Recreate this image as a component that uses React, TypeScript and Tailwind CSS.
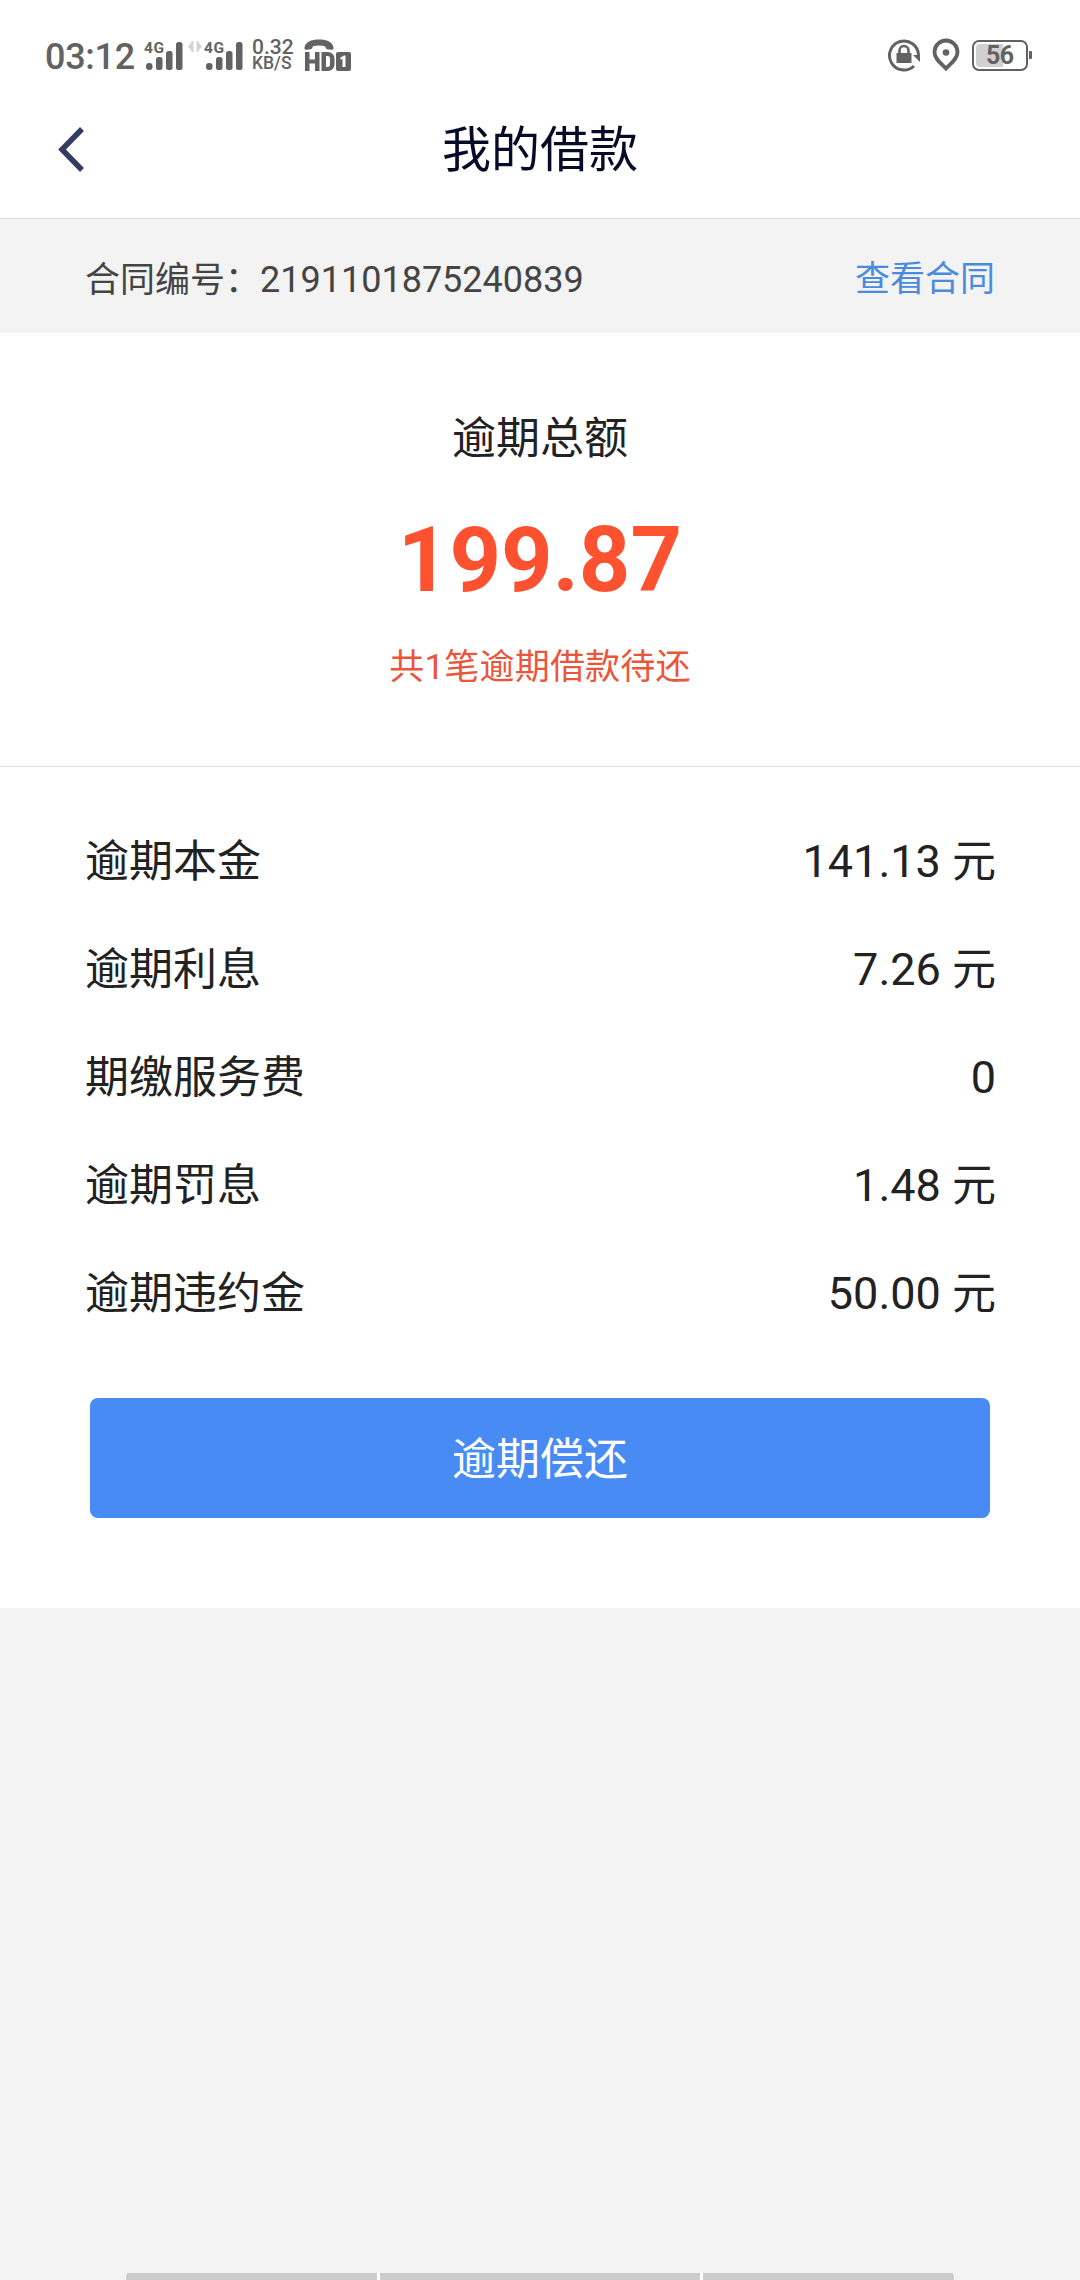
import React from "react";

const rows = [
  { label: "逾期本金", value: "141.13 ", unit: "元" },
  { label: "逾期利息", value: "7.26 ", unit: "元" },
  { label: "期缴服务费", value: "0" },
  { label: "逾期罚息", value: "1.48 ", unit: "元" },
  { label: "逾期违约金", value: "50.00 ", unit: "元" },
];

function SignalIcon() {
  return (
    <svg width="40" height="32" viewBox="0 0 40 32" fill="#626262">
      <text x="0" y="14" fontSize="15.5" fontWeight="700" textLength="20">4G</text>
      <rect x="2" y="24" width="6.5" height="7" rx="3" />
      <rect x="12" y="18" width="6.5" height="13" rx="2.5" />
      <rect x="22" y="12" width="6.5" height="19" rx="2.5" />
      <rect x="32" y="3" width="6.5" height="28" rx="2.5" />
    </svg>
  );
}

function DataArrows() {
  return (
    <svg width="14" height="32" viewBox="0 0 14 32" fill="#d2d2d2">
      <path d="M0 7.5 4 3v9zM14 7.5 10 3v9z" />
      <rect x="3.5" y="2" width="2" height="11" />
      <rect x="8.5" y="2" width="2" height="11" />
    </svg>
  );
}

function HdCallIcon() {
  return (
    <svg width="48" height="34" viewBox="0 0 48 34" fill="#626262">
      <path d="M0.500 9.500C1.500 4 7 1.500 15 1.500s13.500 2.500 14.500 8c.2 1.500-.5 2.300-2 2.300l-4-.6c-1.500-.3-2-1-2.200-2.700-4-1.200-8.600-1.200-12.600 0-.2 1.700-.7 2.400-2.200 2.700l-4 .6c-1.500 0-2.200-.8-2-2.300z" />
      <path d="M1 14h4.500v7.500h5.500V14h4.500v19H11v-7.500H5.500V33H1z" />
      <path fillRule="evenodd" d="M17.500 14h6c4.500 0 7 3 7 7v5c0 4-2.500 7-7 7h-6zm4.500 4v11h1.500c2 0 2.500-1 2.500-3v-5c0-2-.5-3-2.500-3z" />
      <rect x="32" y="14" width="15" height="19" rx="2" />
      <path d="M36.500 19.500 40 17.500h1.500V29H38.500v-8l-2 .8z" fill="white" />
    </svg>
  );
}

function RotationLockIcon() {
  return (
    <svg width="34" height="34" viewBox="0 0 34 34" fill="none">
      <path d="M27 28A14.500 14.500 0 1 1 31.500 17" stroke="#626262" strokeWidth="3" />
      <path d="M26 17h7v7z" fill="#626262" />
      <path d="M12.500 16v-3.500a4.500 4.500 0 0 1 9 0V16" stroke="#626262" strokeWidth="2.600" />
      <rect x="9.500" y="15" width="15" height="10" fill="#626262" />
    </svg>
  );
}

function LocationIcon() {
  return (
    <svg width="28" height="34" viewBox="0 0 28 34" fill="none">
      <path
        d="M14 30.500C10 26 2.500 21.500 2.500 14a11.500 11.500 0 0 1 23 0C25.500 21.500 18 26 14 30.500z"
        stroke="#626262"
        strokeWidth="3.800"
      />
      <circle cx="14" cy="14.500" r="3.300" fill="#626262" />
    </svg>
  );
}

function Battery() {
  return (
    <div className="flex items-center gap-[1px]">
      <div className="flex h-[31px] w-[56px] rounded-[7px] border-2 border-[#626262] p-[2px]">
        <div className="flex h-full w-[27px] rounded-l-[4px] bg-[#d0d0d0]">
          <span className="ml-[10px] text-[25px] leading-[24px] font-bold tracking-[-0.5px]">56</span>
        </div>
      </div>
      <div className="h-[8px] w-[3px] rounded-r-[1px] bg-[#626262]" />
    </div>
  );
}

function StatusBar() {
  return (
    <div className="flex h-[110px] w-full shrink-0 items-center justify-between pr-[48px] pl-[45px] text-[#626262]">
      <div className="flex items-center">
        <span className="mt-[3px] w-[99px] text-[36px] font-medium tracking-[-0.3px]">03:12</span>
        <SignalIcon />
        <span className="ml-[4px]">
          <DataArrows />
        </span>
        <span className="ml-[2px]">
          <SignalIcon />
        </span>
        <div className="ml-[8px] flex w-[52px] flex-col">
          <span className="text-[21px] leading-[16px] font-medium">0.32</span>
          <span className="text-[17.5px] leading-[16px] font-medium">KB/S</span>
        </div>
        <HdCallIcon />
      </div>
      <div className="flex items-center">
        <RotationLockIcon />
        <span className="ml-[11px]">
          <LocationIcon />
        </span>
        <span className="ml-[12px]">
          <Battery />
        </span>
      </div>
    </div>
  );
}

function Header() {
  return (
    <div className="grid h-[108px] w-full grid-cols-3 items-start px-[57px] pt-[4px]">
      <svg className="mt-[12px]" width="30" height="50" viewBox="0 0 30 50" fill="none">
        <path d="M25 3 5 23.500 25 44" stroke="#353c62" strokeWidth="5.500" />
      </svg>
      <span className="text-center text-[49px] leading-[74px] text-[#060b26]">我的借款</span>
    </div>
  );
}

function NavigationHint() {
  return (
    <div className="mt-auto flex h-[7px] w-[828px] gap-[3px] self-center overflow-hidden rounded-t-[3px] bg-white">
      <div className="w-[251px] bg-[#cdcdcd]" />
      <div className="w-[320px] bg-[#cdcdcd]" />
      <div className="w-[251px] bg-[#cdcdcd]" />
    </div>
  );
}

function App() {
  return (
    <div className="flex h-[2280px] w-[1080px] flex-col bg-[#f3f3f3] font-['Roboto','Noto_Sans_CJK_SC',sans-serif] text-[#222]">
      <div className="flex w-full flex-col bg-white">
        <StatusBar />
        <Header />
      </div>
      <div className="flex h-[115px] w-full items-center justify-between border-t border-[#ddd] px-[85px] pt-[8px] text-[35px] text-[#444]">
        <span>
          合同编号：<span className="text-[36px]">2191101875240839</span>
        </span>
        <span className="pt-[1px] text-[#4a8be0]">查看合同</span>
      </div>
      <div className="flex h-[434px] w-full flex-col items-center border-b border-[#e0e0e0] bg-white pt-[73px]">
        <span className="text-[44px] leading-[66px]">逾期总额</span>
        <span className="mt-[37px] text-[90px] leading-[104px] font-bold text-[#fd5130]">199.87</span>
        <span className="mt-[29px] text-[35px] leading-[52px] tracking-[0.2px] text-[#e9563a]">
          共1笔逾期借款待还
        </span>
      </div>
      <div className="flex h-[841px] w-full flex-col bg-white pr-[84px] pl-[85px] pt-[41px]">
        {rows.map((row) => (
          <div key={row.label} className="flex h-[108px] items-center justify-between text-[44px]">
            <span>{row.label}</span>
            <span className="pb-[1px]">
              <span className="text-[45px] whitespace-pre">{row.value}</span>
              {row.unit}
            </span>
          </div>
        ))}
        <button className="mt-[50px] mr-[6px] ml-[5px] h-[120px] rounded-[8px] bg-[#488bf4] pt-[3px] text-[44px] text-white">
          逾期偿还
        </button>
      </div>
      <NavigationHint />
    </div>
  );
}

export default App;
